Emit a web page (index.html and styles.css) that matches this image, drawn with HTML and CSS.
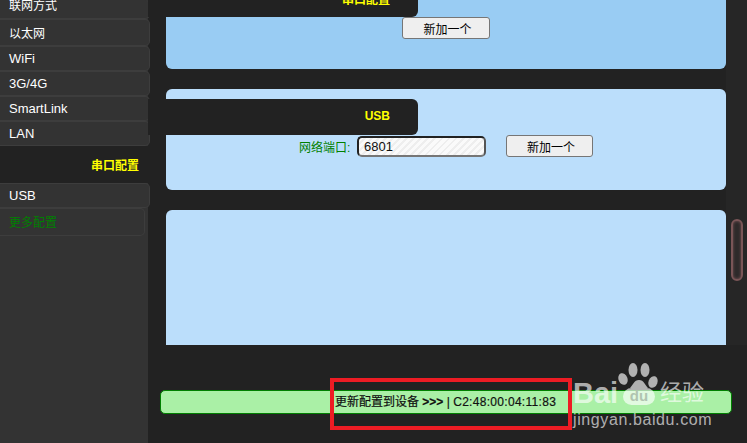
FILE: index.html
```html
<!DOCTYPE html>
<html lang="zh-CN">
<head>
    <meta charset="UTF-8">
    <title>配置</title>
    <link rel="stylesheet" href="styles.css">
</head>
<body>
    <div class="page">
        <nav class="sidebar">
            <div class="menu-item first">联网方式</div>
            <div class="menu-item tall">以太网</div>
            <div class="menu-item">WiFi</div>
            <div class="menu-item">3G/4G</div>
            <div class="menu-item">SmartLink</div>
            <div class="menu-item">LAN</div>
            <div class="menu-active">串口配置</div>
            <div class="menu-item">USB</div>
            <div class="menu-item more">更多配置</div>
        </nav>

        <main class="main">
            <div class="scroll-area">
                <div class="panels">
                    <section class="panel panel-serial">
                        <h2 class="panel-title">串口配置</h2>
                        <div class="panel-row">
                            <button class="btn">新加一个</button>
                        </div>
                    </section>
                    <section class="panel panel-usb">
                        <h2 class="panel-title">USB</h2>
                        <div class="panel-row port-row">
                            <label class="port-label">网络端口:</label>
                            <input class="port-input" type="text" value="6801">
                            <button class="btn">新加一个</button>
                        </div>
                    </section>
                    <section class="panel panel-more"></section>
                </div>
                <div class="scroll-track">
                    <div class="scroll-thumb"></div>
                </div>
            </div>
            <div class="footer">
                <div class="update-bar">更新配置到设备 <b>&gt;&gt;&gt;</b> | <span class="mac">C2:48:00:04:11:83</span></div>
            </div>
        </main>
    </div>

    <!-- annotation and watermark sit over the page -->
    <div class="red-box"></div>
    <div class="watermark">
        <svg class="paw" width="44" height="46" viewBox="0 0 44 46">
            <ellipse cx="6" cy="17" rx="4.5" ry="6" transform="rotate(-20 6 17)"/>
            <ellipse cx="16" cy="8" rx="4.5" ry="7"/>
            <ellipse cx="28" cy="8" rx="4.5" ry="7"/>
            <ellipse cx="36" cy="20" rx="4.5" ry="6" transform="rotate(20 36 20)"/>
            <path d="M22 18c-5 0-6 5-9 8h18c-3-3-4-8-9-8z"/>
        </svg>
        <span class="wm-bai">Bai</span>
        <span class="wm-du">du</span>
        <span class="wm-cn">经验</span>
        <span class="wm-url">jingyan.baidu.com</span>
    </div>
</body>
</html>
```

FILE: styles.css
```css
* {
    margin: 0;
    padding: 0;
    box-sizing: border-box;
}

html, body {
    width: 747px;
    height: 443px;
    overflow: hidden;
}

body {
    font-family: "Liberation Sans", "Noto Sans CJK SC", sans-serif;
    font-size: 13px;
    background-color: #222222;
    position: relative;
}

.page {
    display: flex;
    height: 443px;
}

.sidebar {
    flex: 0 0 148px;
    min-width: 0;
    background-color: #333333;
    color: #ffffff;
}

.menu-item {
    width: 150px;
    height: 25px;
    line-height: 23px;
    padding-left: 9px;
    background-color: #333333;
    border: 1px solid #3d3d3d;
    border-left: none;
    border-radius: 0 5px 5px 0;
}

.menu-item.first {
    height: 19px;
    line-height: 13px;
    font-size: 12px;
    border-top: none;
}

.menu-item.tall {
    height: 27px;
    line-height: 28px;
    font-size: 12px;
}

.menu-item.more {
    width: 145px;
    height: 28px;
    line-height: 29px;
    font-size: 12px;
    color: #008000;
}

.menu-active {
    height: 37px;
    line-height: 40px;
    padding-right: 9px;
    text-align: right;
    font-size: 12px;
    font-weight: bold;
    color: #ffff00;
    background-color: #222222;
}

.main {
    flex: 1;
    display: flex;
    flex-direction: column;
    min-width: 0;
}

.scroll-area {
    display: flex;
    height: 345px;
    overflow: hidden;
}

.panels {
    flex: 0 0 578px;
    padding-left: 18px;
}

.panel {
    border-radius: 6px;
    margin-bottom: 20px;
}

.panel-serial {
    height: 69px;
    background-color: #99ccf3;
    border-radius: 0 0 6px 6px;
}

.panel-serial .panel-title {
    height: 17px;
    line-height: 0;
    border-radius: 0 0 6px 0;
}

.panel-usb {
    height: 101px;
    padding-top: 10px;
    background-color: #bbdefb;
}

.panel-more {
    height: 200px;
    background-color: #bbdefb;
}

.panel-title {
    width: 270px;
    height: 36px;
    margin-left: -18px;
    padding-right: 28px;
    line-height: 34px;
    text-align: right;
    font-size: 12px;
    font-weight: bold;
    color: #ffff00;
    background-color: #222222;
    border-radius: 0 6px 6px 0;
}

.panel-row {
    display: flex;
    justify-content: center;
}

.port-row {
    align-items: center;
    justify-content: flex-start;
    padding-left: 133px;
}

.port-label {
    width: 51px;
    margin-right: 7px;
    font-size: 12px;
    color: #008000;
    white-space: nowrap;
}

.port-input {
    width: 129px;
    height: 21px;
    padding-left: 5px;
    margin-right: 20px;
    font-family: inherit;
    font-size: 13px;
    color: #111111;
    border: 2px solid;
    border-color: #222222 #555555 #767676 #222222;
    border-radius: 5px;
    outline: none;
    background: repeating-linear-gradient(135deg, #fafafa 0 3px, #eeeeee 3px 5px);
}

.btn {
    width: 88px;
    height: 22px;
    padding-left: 3px;
    font-family: inherit;
    font-size: 12px;
    color: #000000;
    background-color: #efefef;
    border: 1px solid #767676;
    border-radius: 3px;
}

.port-row .btn {
    width: 87px;
}

.scroll-track {
    flex: 0 0 21px;
    padding: 219px 4px 0 5px;
    background-color: #262626;
}

.scroll-thumb {
    height: 62px;
    background-color: #2e2a2a;
    border: 2px solid #7a5557;
    border-radius: 6px;
    box-shadow: inset 0 0 3px #7a5557;
}

.footer {
    flex: 1;
    padding: 45px 0 0 12px;
}

.update-bar {
    width: 572px;
    height: 24px;
    line-height: 22px;
    padding-left: 174px;
    font-size: 12px;
    color: #111111;
    -webkit-text-stroke: 0.2px #111111;
    background-color: #aaf0a6;
    border: 1px solid #008000;
    border-radius: 5px;
}

.mac {
    letter-spacing: 0.3px;
}

.red-box {
    position: absolute;
    left: 330px;
    top: 378px;
    width: 242px;
    height: 52px;
    border: 4px solid #ed1c24;
}

.watermark {
    position: absolute;
    left: 572px;
    top: 362px;
    width: 175px;
    height: 81px;
    color: rgba(255, 255, 255, 0.65);
}

.paw {
    position: absolute;
    left: 45px;
    top: 0;
    fill: rgba(255, 255, 255, 0.65);
}

.wm-bai {
    position: absolute;
    left: 1px;
    top: 15px;
    font-size: 29px;
    font-weight: bold;
}

.wm-du {
    position: absolute;
    left: 51px;
    top: 26px;
    width: 32px;
    height: 17px;
    line-height: 15px;
    text-align: center;
    font-size: 15px;
    font-weight: bold;
    color: #b0c4b0;
    background-color: rgba(255, 255, 255, 0.65);
    border-radius: 9px;
}

.wm-cn {
    position: absolute;
    left: 88px;
    top: 18px;
    font-size: 22px;
    line-height: 26px;
}

.wm-url {
    position: absolute;
    left: 1px;
    top: 49px;
    font-size: 16px;
    letter-spacing: 0.6px;
}
```
